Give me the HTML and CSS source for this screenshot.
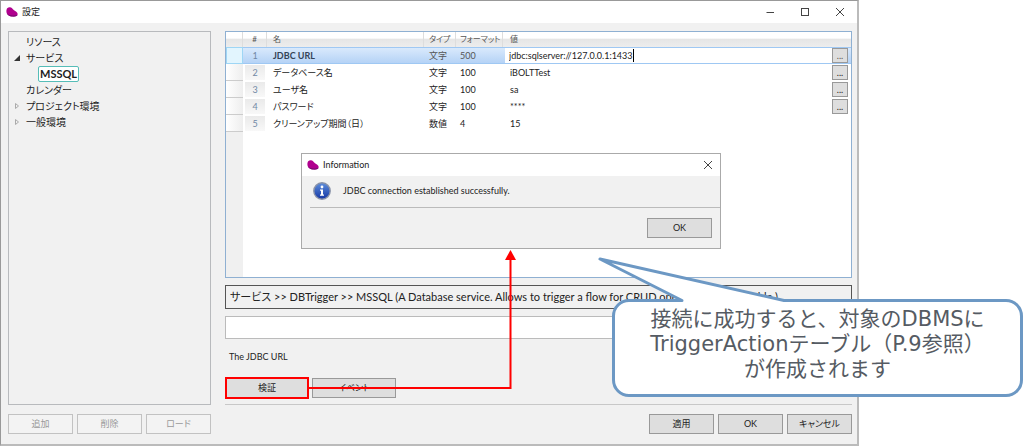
FILE: index.html
```html
<!DOCTYPE html>
<html lang="ja">
<head>
  <meta charset="UTF-8" />
  <meta name="viewport" content="width=device-width, initial-scale=1.0"/>
  <title>設定</title>
  <link rel="stylesheet" href="styles.css">
</head>
<body>
  <div class="stage">
    <div class="window">
      <header class="titlebar">
        <svg class="logo" viewBox="0 0 12 10"><path d="M.5 3C.8 1 2 .2 3.800.300c2 .1 2.700 1.700 4.200 3 1.500 1.300 3.500 1.700 3.700 3.700.1 2-2.200 2.700-5.200 2.600C3 9.500-.3 7 .5 3z" fill="#b0008e"/><path d="M.8 6.200c2 2 5.200 2.800 10.700 1.800C10.700 9.500 9 9.800 6.500 9.600 3.500 9.400 1.500 8.200.8 6.200z" fill="#760b70"/></svg>
        <h1 class="title">設定</h1>
        <button class="win-button" aria-label="最小化"><svg viewBox="0 0 10 10"><path d="M1.500 5.500h7.500"/></svg></button>
        <button class="win-button" aria-label="最大化"><svg viewBox="0 0 10 10"><rect x="1.500" y="1.500" width="7" height="7"/></svg></button>
        <button class="win-button" aria-label="閉じる"><svg viewBox="0 0 10 10"><path d="M1 1l8 8M9 1l-8 8"/></svg></button>
      </header>

      <div class="content">
        <aside class="side">
          <ul class="tree">
            <li>リソース</li>
            <li><svg class="twisty" viewBox="0 0 6 6"><path d="M6 0v6H0z" fill="#333"/></svg>サービス</li>
            <li class="child"><span class="selected">MSSQL</span></li>
            <li>カレンダー</li>
            <li><svg class="twisty" viewBox="0 0 6 6"><path d="M1.500.500v5L4.500 3z" fill="none" stroke="#aaa"/></svg>プロジェクト環境</li>
            <li><svg class="twisty" viewBox="0 0 6 6"><path d="M1.500.500v5L4.500 3z" fill="none" stroke="#aaa"/></svg>一般環境</li>
          </ul>
          <div class="button-row">
            <button class="button" disabled>追加</button>
            <button class="button" disabled>削除</button>
            <button class="button" disabled>ロード</button>
          </div>
        </aside>

        <main class="main">
          <div class="grid">
            <table class="props">
              <thead>
                <tr><th class="gutter"></th><th class="num">#</th><th class="name">名</th><th class="type">タイプ</th><th class="format">フォーマット</th><th class="value">値</th><th class="more"></th></tr>
              </thead>
              <tbody>
                <tr class="active"><td class="gutter"></td><td class="num"><span>1</span></td><td class="name">JDBC URL</td><td class="type">文字</td><td class="format">500</td><td class="value"><div class="edit"><input class="cell-input" type="text" size="22" aria-label="JDBC URL" value="jdbc:sqlserver://127.0.0.1:1433"></div></td><td class="more"><button class="more-button">...</button></td></tr>
                <tr><td class="gutter"></td><td class="num"><span>2</span></td><td class="name">データベース名</td><td class="type">文字</td><td class="format">100</td><td class="value">iBOLTTest</td><td class="more"><button class="more-button">...</button></td></tr>
                <tr><td class="gutter"></td><td class="num"><span>3</span></td><td class="name">ユーザ名</td><td class="type">文字</td><td class="format">100</td><td class="value">sa</td><td class="more"><button class="more-button">...</button></td></tr>
                <tr><td class="gutter"></td><td class="num"><span>4</span></td><td class="name">パスワード</td><td class="type">文字</td><td class="format">100</td><td class="value">****</td><td class="more"><button class="more-button">...</button></td></tr>
                <tr><td class="gutter"></td><td class="num"><span>5</span></td><td class="name">クリーンアップ期間（日）</td><td class="type">数値</td><td class="format">4</td><td class="value">15</td><td class="more"></td></tr>
              </tbody>
            </table>

            <section class="dialog" role="dialog" aria-labelledby="dialog-title">
              <header class="titlebar">
                <svg class="logo" viewBox="0 0 12 10"><path d="M.5 3C.8 1 2 .2 3.800.300c2 .1 2.700 1.700 4.200 3 1.500 1.300 3.500 1.700 3.700 3.700.1 2-2.200 2.700-5.200 2.600C3 9.500-.3 7 .5 3z" fill="#b0008e"/><path d="M.8 6.200c2 2 5.200 2.800 10.700 1.800C10.700 9.500 9 9.800 6.500 9.600 3.500 9.400 1.500 8.200.8 6.200z" fill="#760b70"/></svg>
                <h2 class="title" id="dialog-title">Information</h2>
                <button class="win-button" aria-label="閉じる"><svg viewBox="0 0 10 10"><path d="M1 1l8 8M9 1l-8 8"/></svg></button>
              </header>
              <div class="message">
                <svg class="info" viewBox="0 0 18 18">
                  <defs><linearGradient id="blue" x1="0" y1="0" x2="0" y2="1"><stop offset="0" stop-color="#5f8fdc"/><stop offset="1" stop-color="#1436a4"/></linearGradient></defs>
                  <circle cx="9" cy="9" r="8.200" fill="url(#blue)" stroke="#8a93a8" stroke-width="1.400"/>
                  <circle cx="9" cy="5" r="1.400" fill="#fff"/><path d="M7 7.500h3v5h1v1.200H7v-1.200h1V8.700H7z" fill="#fff"/>
                </svg>
                <p>JDBC connection established successfully.</p>
              </div>
              <div class="dialog-actions"><button class="button">OK</button></div>
            </section>
          </div>

          <p class="description">サービス &gt;&gt; DBTrigger &gt;&gt; MSSQL (A Database service. Allows to trigger a flow for CRUD operations on any table.)</p>
          <input class="textbox" type="text" aria-labelledby="hint">
          <p class="hint" id="hint">The JDBC URL</p>
          <div class="actions">
            <button class="button wide marked">検証</button>
            <button class="button wide">イベント</button>
            <svg class="arrow" viewBox="0 0 210 144"><path d="M0 138h203.500V8" fill="none" stroke="#f00" stroke-width="2"/><path d="M203.500 0l5.500 10h-11z" fill="#f00"/></svg>
          </div>
          <div class="button-row footer">
            <button class="button">適用</button>
            <button class="button">OK</button>
            <button class="button">キャンセル</button>
          </div>
        </main>
      </div>
    </div>

    <div class="callout">
      <svg class="tail" viewBox="0 0 190 48"><path d="M85 44.500L3 3l184 41.500V48H85z" fill="#fff"/><path d="M70 44.500h15L3 3l184 41.500" fill="none" stroke="#6c98c4" stroke-width="3" stroke-linejoin="round" stroke-linecap="round"/></svg>
      <p>接続に成功すると、対象のDBMSに<br>TriggerActionテーブル（P.9参照）<br>が作成されます</p>
    </div>
  </div>
</body>
</html>
```

FILE: styles.css
```css
* {
  box-sizing: border-box;
}
body {
  margin: 0;
  background-color: #fff;
  font-family: Lato, 'Noto Sans CJK JP', sans-serif;
  font-size: 9px;
  line-height: 16px;
  color: #222;
}
h1, h2, p, ul {
  margin: 0;
  padding: 0;
}
button, input {
  font: inherit;
  color: inherit;
  margin: 0;
}
.stage {
  position: relative;
}
.window {
  margin-right: 165px;
  background-color: #f1f1f1;
  border: 1px solid #999;
  border-right: 2px solid #bbb;
  border-bottom: 2px solid #bbb;
}
.titlebar {
  display: flex;
  align-items: center;
  height: 22px;
  background-color: #fff;
}
.logo {
  width: 12px;
  height: 10px;
  margin: 0 4px 0 5px;
}
.title {
  flex: 1;
  font-size: 9px;
  font-weight: 400;
}
.win-button {
  width: 35px;
  height: 20px;
  padding: 0;
  border: none;
  background: none;
}
.win-button svg {
  display: block;
  width: 10px;
  height: 10px;
  margin: 0 auto;
  fill: none;
  stroke: #444;
}
.content {
  display: flex;
  gap: 14px;
  padding: 8px 5px 10px 7px;
}
.side {
  flex: 0 0 203px;
  display: flex;
  flex-direction: column;
  gap: 9px;
}
.tree {
  flex: 1;
  padding: 2px 0 0 17px;
  border: 1px solid #b8babd;
  list-style: none;
  font-size: 10px;
  font-feature-settings: 'palt';
}
.tree li {
  position: relative;
  height: 16px;
}
.tree .child {
  padding-left: 12px;
}
.twisty {
  position: absolute;
  left: -12px;
  top: 5px;
  width: 6px;
  height: 6px;
}
.selected {
  display: inline-block;
  height: 16px;
  line-height: 14px;
  padding: 0 1px;
  border: 1px solid #56bdb8;
  border-radius: 2px;
  background-color: #fff;
  font-size: 11px;
  font-weight: 700;
}
.button-row {
  display: flex;
  gap: 4px;
}
.button {
  width: 65px;
  height: 20px;
  padding: 0;
  border: 1px solid #999;
  background-color: #dedede;
  line-height: 16px;
  font-feature-settings: 'palt';
}
.button:disabled {
  border-color: #c2c2c2;
  background-color: #f3f3f3;
  color: #999;
}
.main {
  flex: 1;
  min-width: 0;
  display: flex;
  flex-direction: column;
}
.grid {
  position: relative;
  height: 247px;
  border: 1px solid #8fb0d2;
  background: linear-gradient(#f0f0f0, #f0f0f0) 0 0 / 17px 100% no-repeat #fff;
}
.props {
  width: 100%;
  border-collapse: separate;
  border-spacing: 0;
  table-layout: fixed;
  font-feature-settings: 'palt';
}
.props th,
.props td {
  height: 17px;
  padding: 0 0 0 5px;
  text-align: left;
  font-weight: 400;
  line-height: 15px;
  white-space: nowrap;
}
.props th {
  height: 15px;
  border-right: 1px solid #ddd;
  background: linear-gradient(#fff 40%, #e6e6e6 50%, #ededed);
  color: #555;
  font-size: 8px;
}
.props .gutter {
  width: 17px;
}
.props td.gutter {
  border-bottom: 1px solid #ccc;
  background: linear-gradient(to right, #fff, #eee);
}
.props .num {
  width: 24px;
  padding: 0 2px;
  text-align: center;
}
.num span {
  display: block;
  background: linear-gradient(#eaeaea, #f8f8f8);
  color: #7188a5;
}
.props .name {
  width: 157px;
  padding-left: 6px;
}
.props .type {
  width: 32px;
}
.props .format {
  width: 47px;
  padding-left: 4px;
}
.props .value {
  padding-left: 7px;
}
.props th.value {
  border-right: none;
}
.props .more {
  width: 19px;
  padding: 0;
  border-right: none;
}
.active td {
  border-top: 1px solid #9fc8f3;
  border-bottom: 1px solid #9fc8f3;
  background: linear-gradient(#d9e9fc, #b5d3f6);
  color: #555;
}
.props .active .gutter {
  background: #e2f5fe;
  border: 1px solid #9ed6f5;
}
.active .num span {
  background: none;
}
.props .active .name {
  color: #344356;
  font-weight: 700;
}
.props .active .value {
  padding: 0 0 0 2px;
}
.edit {
  display: flex;
  height: 15px;
  background-color: #fff;
}
.cell-input {
  field-sizing: content;
  height: 13px;
  margin: 1px 0;
  padding: 0 0 0 4px;
  border: none;
  border-right: 1px solid #000;
  background-color: #fff;
  color: #222;
}
.more-button {
  display: block;
  width: 16px;
  height: 15px;
  padding: 0;
  border: 1px solid #999;
  background-color: #dedede;
  line-height: 12px;
}
.dialog {
  position: absolute;
  left: 75px;
  top: 121px;
  width: 420px;
  border: 1px solid #aaa;
  background-color: #f1f1f1;
}
.dialog .win-button {
  width: 24px;
}
.message {
  display: flex;
  gap: 12px;
  height: 32px;
  margin-left: 8px;
  padding: 6px 0 0 3px;
  border-bottom: 1px solid #bbb;
}
.message p {
  line-height: 18px;
}
.info {
  width: 18px;
  height: 18px;
}
.dialog-actions {
  display: flex;
  justify-content: flex-end;
  padding: 10px 8px;
}
.description {
  height: 24px;
  margin-top: 7px;
  padding: 0 4px;
  border: 1px solid #555;
  font-size: 11px;
  line-height: 22px;
  white-space: nowrap;
  overflow: hidden;
  font-feature-settings: 'palt';
}
.textbox {
  width: 100%;
  height: 23px;
  margin-top: 7px;
  border: 1px solid #bbb;
  background-color: #fff;
}
.hint {
  margin-top: 10px;
  padding-left: 4px;
}
.actions {
  position: relative;
  display: flex;
  align-items: center;
  gap: 3px;
  height: 40px;
  padding-top: 6px;
  border-bottom: 1px solid #c8c8c8;
}
.button.wide {
  width: 84px;
}
.button.marked {
  height: 22px;
  border: 2px solid #f00;
}
.arrow {
  position: absolute;
  left: 82px;
  bottom: 10px;
  width: 210px;
  height: 144px;
  z-index: 2;
}
.footer {
  justify-content: flex-end;
  margin-top: 9px;
}
.callout {
  position: absolute;
  right: 1px;
  top: 299px;
  width: 411px;
  padding: 5px 0 12px;
  border: 3px solid #6c98c4;
  border-radius: 17px;
  background-color: #fff;
  font-family: 'DejaVu Sans', 'Noto Sans CJK JP', sans-serif;
  font-size: 21px;
  line-height: 25px;
  color: #555b63;
  text-align: center;
  z-index: 3;
}
.tail {
  position: absolute;
  left: -18px;
  top: -46px;
  width: 190px;
  height: 48px;
}
.callout p {
  position: relative;
}
```
